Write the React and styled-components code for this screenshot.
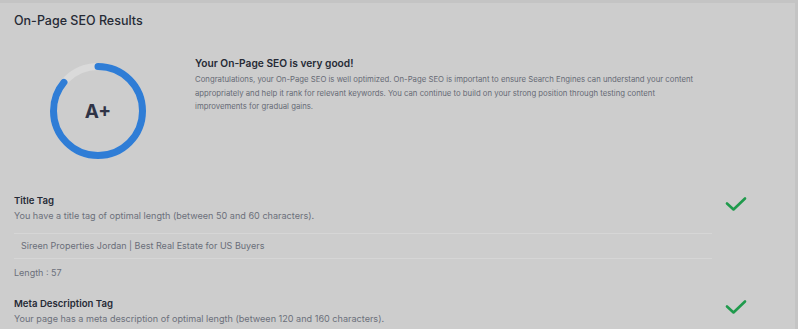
import React from "react";
import styled, { createGlobalStyle } from "styled-components";

const GlobalStyle = createGlobalStyle`
  html, body {
    margin: 0;
    padding: 0;
    background: #c4c4c4;
  }
  body {
    font-family: Inter, "Noto Sans", sans-serif;
    color: #2b2f3b;
  }
`;

const Card = styled.div`
  margin: 3px 3px 0 0;
  background: #cdcdcd;
  height: 326px;
  padding: 0 14px;
  box-sizing: border-box;
  overflow: hidden;
`;

const Heading = styled.h2`
  margin: 0;
  padding-top: 9px;
  font-size: 12.5px;
  font-weight: 500;
  line-height: 17px;
  color: #262a35;
`;

const Summary = styled.div`
  display: flex;
  align-items: flex-start;
  margin-top: 34px;
`;

const ScoreRing = styled.div`
  position: relative;
  width: 96px;
  height: 96px;
  margin-left: 36px;
  flex-shrink: 0;
`;

const Grade = styled.span`
  position: absolute;
  inset: 0;
  display: flex;
  align-items: center;
  justify-content: center;
  font-size: 19px;
  font-weight: 700;
  color: #2f3346;
`;

const SummaryText = styled.div`
  margin-left: 49px;
  max-width: 505px;
`;

const SummaryTitle = styled.h3`
  margin: -8px 0 2px;
  font-size: 10.2px;
  font-weight: 600;
  line-height: 16px;
  color: #262a35;
`;

const Paragraph = styled.p`
  margin: 0;
  font-size: 7.75px;
  line-height: 13.5px;
  color: #666a75;
`;

const Item = styled.div`
  display: grid;
  grid-template-columns: 698px 1fr;
  margin-top: ${(p) => p.$top}px;
`;

const ItemTitle = styled.h4`
  margin: 0;
  font-size: 9.6px;
  font-weight: 600;
  line-height: 14px;
  color: #262a35;
`;

const ItemText = styled.p`
  margin: 1px 0 0;
  font-size: 9.1px;
  line-height: 14px;
  color: #6c707b;
`;

const ValueBox = styled.div`
  margin-top: 10px;
  border-top: 1px solid #d6d6d6;
  border-bottom: 1px solid #d6d6d6;
  padding: 6px 7px;
  font-size: 9px;
  line-height: 12px;
  color: #6a6e79;
`;

const Meta = styled.div`
  margin-top: 7px;
  font-size: 9px;
  line-height: 14px;
  color: #6c707b;
`;

const CheckCell = styled.div`
  padding: 2px 0 0 13px;
`;

const Ring = ({ value }) => {
  const r = 44.5;
  const c = 2 * Math.PI * r;
  return (
    <svg width="96" height="96" viewBox="0 0 96 96">
      <circle cx="48" cy="48" r={r} fill="none" stroke="#dadada" strokeWidth="7" />
      <circle
        cx="48"
        cy="48"
        r={r}
        fill="none"
        stroke="#2f7dd6"
        strokeWidth="7"
        strokeLinecap="round"
        strokeDasharray={`${c * value} ${c}`}
        transform="rotate(-90 48 48)"
      />
    </svg>
  );
};

const Check = () => (
  <svg width="22" height="16" viewBox="0 0 22 16">
    <path d="M2 7.5 L8.5 13.5 L20 2.5" fill="none" stroke="#1f9a4c" strokeWidth="2.6" strokeLinecap="round" strokeLinejoin="round" />
  </svg>
);

const checks = [
  {
    title: "Title Tag",
    text: "You have a title tag of optimal length (between 50 and 60 characters).",
    value: "Sireen Properties Jordan | Best Real Estate for US Buyers",
    length: 57,
    top: 35,
  },
  {
    title: "Meta Description Tag",
    text: "Your page has a meta description of optimal length (between 120 and 160 characters).",
    top: 17,
  },
];

export default function App() {
  return (
    <>
      <GlobalStyle />
      <Card>
        <Heading>On-Page SEO Results</Heading>
        <Summary>
          <ScoreRing>
            <Ring value={0.86} />
            <Grade>A+</Grade>
          </ScoreRing>
          <SummaryText>
            <SummaryTitle>Your On-Page SEO is very good!</SummaryTitle>
            <Paragraph>
              Congratulations, your On-Page SEO is well optimized. On-Page SEO is important to ensure Search
              Engines can understand your content appropriately and help it rank for relevant keywords. You can
              continue to build on your strong position through testing content improvements for gradual gains.
            </Paragraph>
          </SummaryText>
        </Summary>
        {checks.map((item) => (
          <Item key={item.title} $top={item.top}>
            <div>
              <ItemTitle>{item.title}</ItemTitle>
              <ItemText>{item.text}</ItemText>
              {item.value && <ValueBox>{item.value}</ValueBox>}
              {item.length && <Meta>Length : {item.length}</Meta>}
            </div>
            <CheckCell>
              <Check />
            </CheckCell>
          </Item>
        ))}
      </Card>
    </>
  );
}
